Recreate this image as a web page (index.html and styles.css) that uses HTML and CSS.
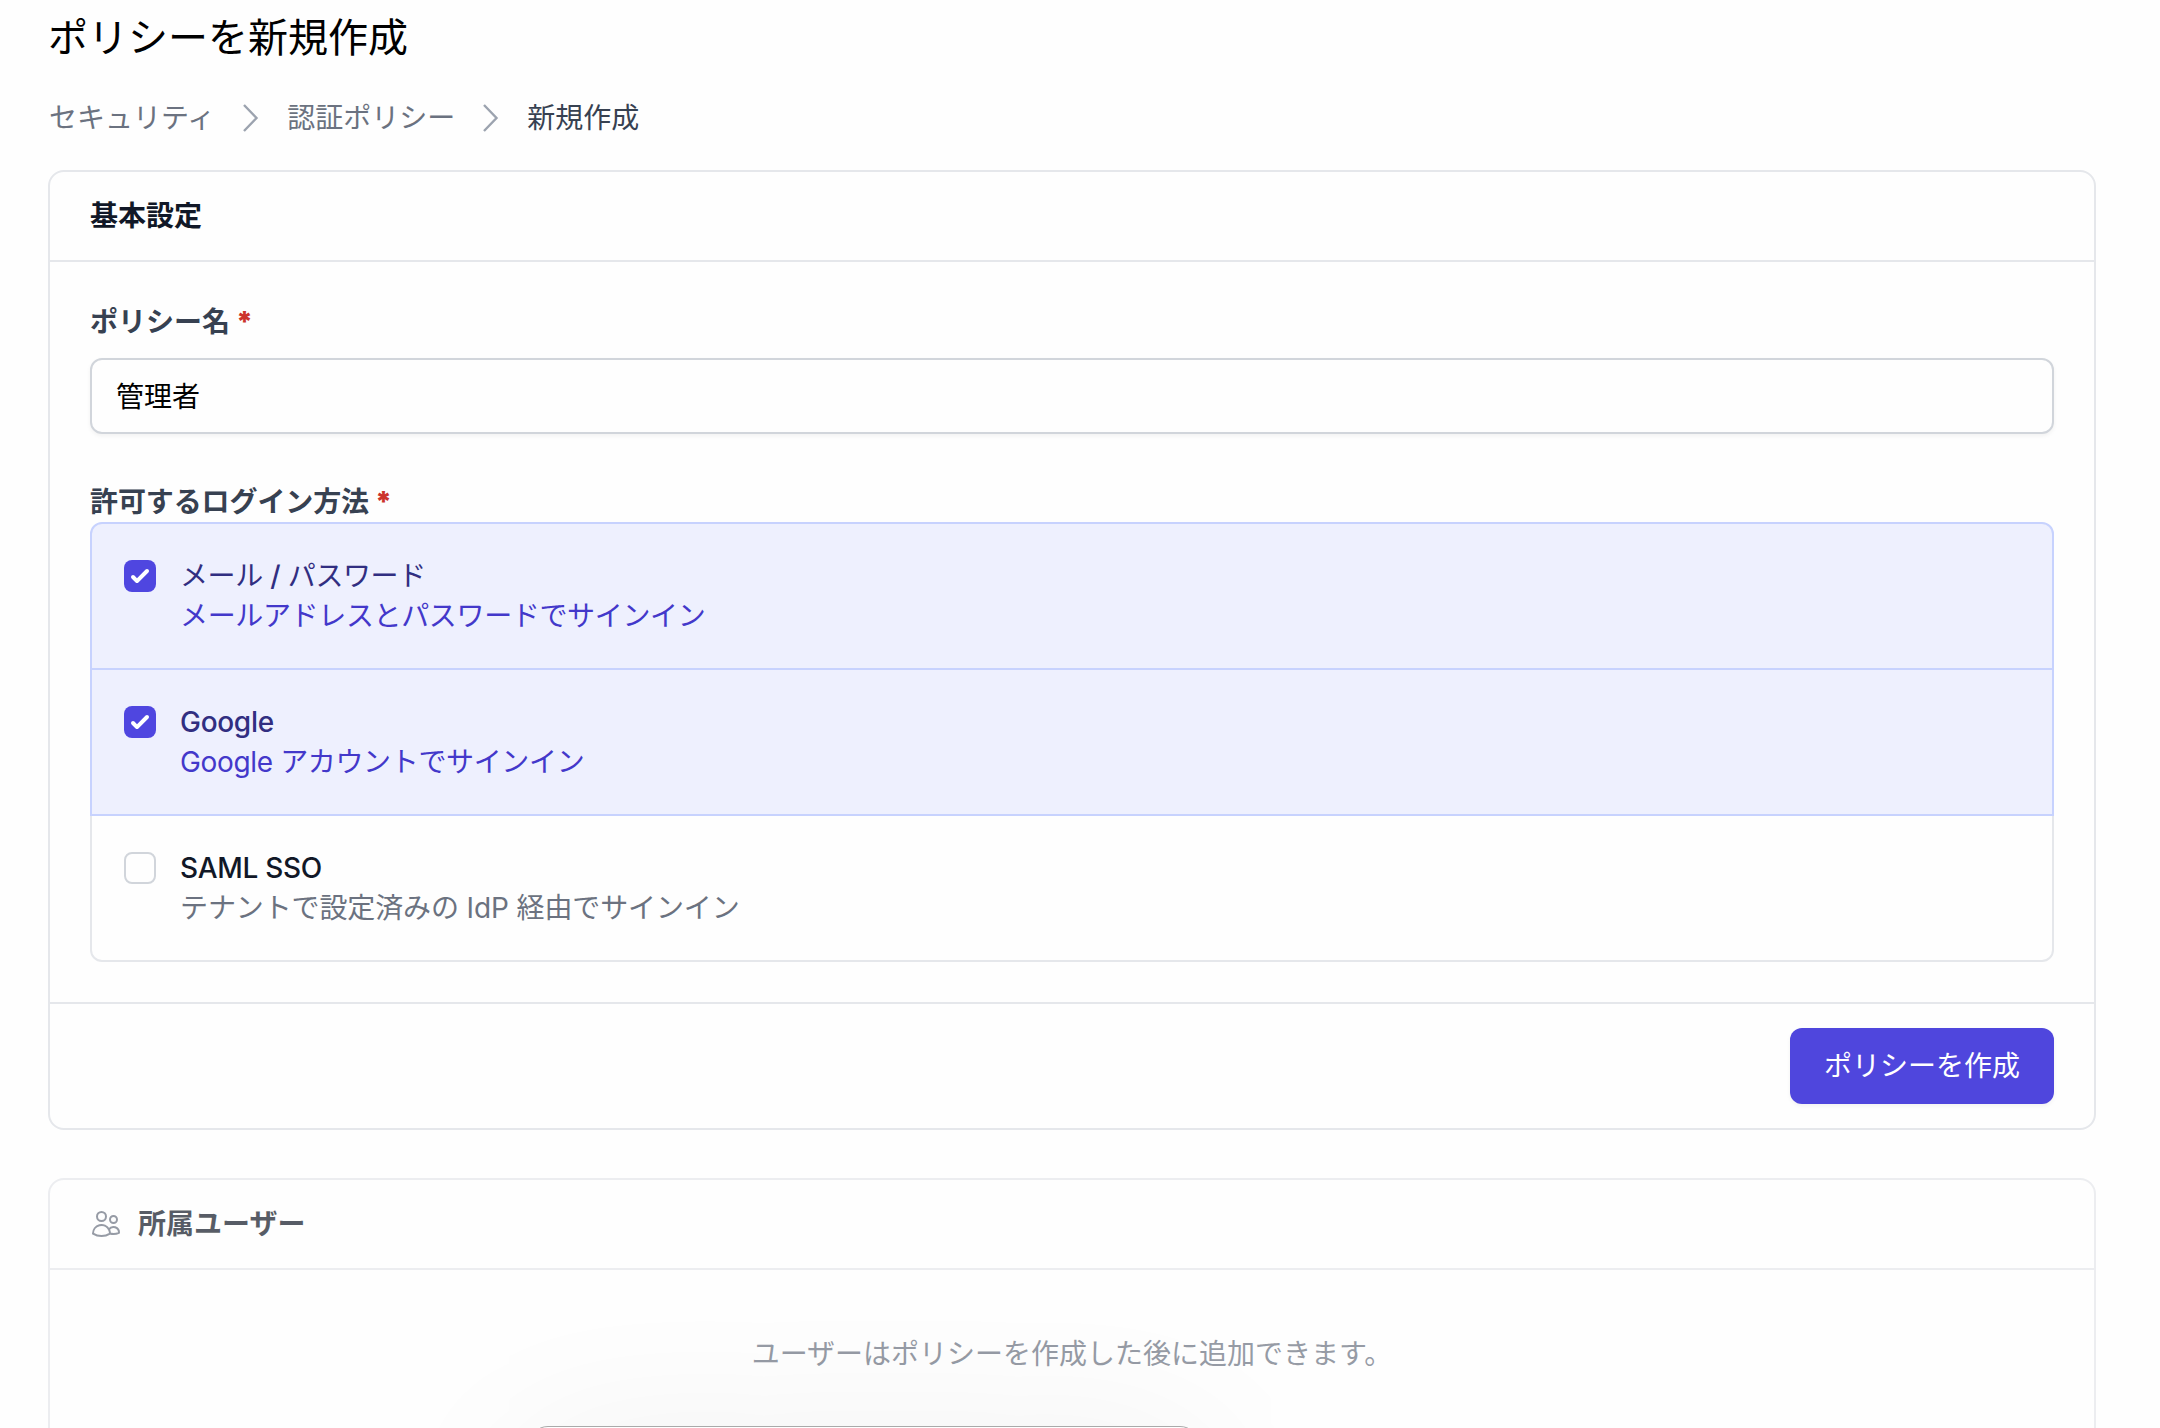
FILE: index.html
```html
<!DOCTYPE html>
<html lang="ja">

<head>
  <meta charset="UTF-8">
  <meta name="viewport" content="width=device-width, initial-scale=1.0">
  <title>ポリシーを新規作成</title>
  <link rel="stylesheet" href="styles.css">
</head>

<body>
  <main class="page">
    <h1 class="title">ポリシーを新規作成</h1>

    <nav class="breadcrumb">
      <a>セキュリティ</a>
      <svg class="chevron" viewBox="0 0 40 40"><path d="M13 7l12.5 13L13 33" /></svg>
      <a>認証ポリシー</a>
      <svg class="chevron" viewBox="0 0 40 40"><path d="M13 7l12.5 13L13 33" /></svg>
      <span class="current">新規作成</span>
    </nav>

    <form class="card">
      <div class="card-header">基本設定</div>
      <div class="card-body">
        <label class="label" for="name">ポリシー名<span class="required">*</span></label>
        <input class="input" type="text" id="name" value="管理者">

        <div class="label label-methods">許可するログイン方法<span class="required">*</span></div>
        <div class="options">
          <label class="option checked">
            <span class="checkbox">
              <svg viewBox="0 0 16 16"><path d="M12.207 4.793a1 1 0 010 1.414l-5 5a1 1 0 01-1.414 0l-2-2a1 1 0 011.414-1.414L6.5 9.086l4.293-4.293a1 1 0 011.414 0z" /></svg>
            </span>
            <span class="option-text">
              <span class="option-name">メール <span class="latin">/</span> パスワード</span>
              <span class="option-desc">メールアドレスとパスワードでサインイン</span>
            </span>
          </label>
          <label class="option checked">
            <span class="checkbox">
              <svg viewBox="0 0 16 16"><path d="M12.207 4.793a1 1 0 010 1.414l-5 5a1 1 0 01-1.414 0l-2-2a1 1 0 011.414-1.414L6.5 9.086l4.293-4.293a1 1 0 011.414 0z" /></svg>
            </span>
            <span class="option-text">
              <span class="option-name latin">Google</span>
              <span class="option-desc">Google アカウントでサインイン</span>
            </span>
          </label>
          <label class="option">
            <span class="checkbox"></span>
            <span class="option-text">
              <span class="option-name latin">SAML SSO</span>
              <span class="option-desc mixed">テナントで設定済みの IdP 経由でサインイン</span>
            </span>
          </label>
        </div>
      </div>
      <div class="card-footer">
        <button class="btn" type="button">ポリシーを作成</button>
      </div>
    </form>

    <section class="card card-muted">
      <div class="card-header">
        <svg class="users" viewBox="0 0 24 24"><path d="M15 19.128a9.38 9.38 0 0 0 2.625.372 9.337 9.337 0 0 0 4.121-.952 4.125 4.125 0 0 0-7.533-2.493M15 19.128v-.003c0-1.113-.285-2.16-.786-3.07M15 19.128v.106A12.318 12.318 0 0 1 8.624 21c-2.331 0-4.512-.645-6.374-1.766l-.001-.109a6.375 6.375 0 0 1 11.964-3.07M12 6.375a3.375 3.375 0 1 1-6.75 0 3.375 3.375 0 0 1 6.75 0Zm8.25 2.25a2.625 2.625 0 1 1-5.25 0 2.625 2.625 0 0 1 5.25 0Z" /></svg>
        所属ユーザー
      </div>
      <p class="empty">ユーザーはポリシーを作成した後に追加できます。</p>
    </section>
  </main>

  <div class="popup"></div>
</body>

</html>
```

FILE: styles.css
```css
* {
  box-sizing: border-box;
}

html,
body {
  height: 100%;
  margin: 0;
  overflow: hidden;
}

body {
  position: relative;
  background: #fefefe;
  color: #000;
  font-family: Inter, "Noto Sans CJK JP", sans-serif;
  font-size: 28px;
  line-height: 40px;
}

.page {
  height: 100%;
  padding: 10px 64px 0 48px;
  overflow: hidden;
}

.title {
  margin: 0 0 32px;
  font-size: 40px;
  font-weight: 400;
  line-height: 56px;
}

.breadcrumb {
  display: flex;
  align-items: center;
  gap: 16px;
  height: 40px;
  margin-bottom: 32px;
  padding-left: 1px;
  color: #6b7280;
}

.breadcrumb .current {
  color: #374151;
}

.chevron {
  width: 40px;
  height: 40px;
  fill: none;
  stroke: #9ca3af;
  stroke-width: 2.4;
}

.card {
  border: 2px solid #e5e7eb;
  border-radius: 16px;
}

.card-header {
  display: flex;
  align-items: center;
  gap: 16px;
  padding: 24px 40px;
  border-bottom: 2px solid #e5e7eb;
  color: #111827;
  font-weight: 600;
}

.card-body {
  padding: 40px;
}

.label {
  display: block;
  color: #374151;
  font-weight: 600;
}

.label-methods {
  margin-top: 48px;
  letter-spacing: -.1px;
}

.required {
  margin-left: 6px;
  color: #cc342d;
  font-weight: 900;
}

.input {
  display: block;
  width: 100%;
  height: 76px;
  margin-top: 16px;
  padding: 0 24px 2px;
  border: 2px solid #d1d5db;
  border-radius: 12px;
  background: #fefefe;
  box-shadow: 0 2px 4px rgba(0, 0, 0, .05);
  color: #000;
  font: inherit;
}

.option {
  display: flex;
  gap: 24px;
  padding: 32px;
  border: 2px solid #e5e7eb;
}

.option + .option {
  margin-top: -2px;
}

.option:first-child {
  border-radius: 12px 12px 0 0;
}

.option:last-child {
  border-radius: 0 0 12px 12px;
}

.option.checked {
  position: relative;
  border-color: #c7d2fe;
  background: #eef0fe;
}

.checkbox {
  flex: none;
  width: 32px;
  height: 32px;
  margin-top: 4px;
  border: 2px solid #d1d5db;
  border-radius: 8px;
}

.checked .checkbox {
  border: 0;
  background: #4f46e0;
}

.checkbox svg {
  display: block;
  fill: #fff;
}

.option-text {
  display: flex;
  flex-direction: column;
}

.option-name {
  color: #111827;
  letter-spacing: -.4px;
}

.option-desc {
  color: #6b7280;
  letter-spacing: -.35px;
}

.option-desc.mixed {
  letter-spacing: -.12px;
}

.latin {
  font-weight: 500;
  letter-spacing: -.3px;
}

.checked .option-name {
  color: #312e81;
}

.checked .option-desc {
  color: #4338ca;
}

.card-footer {
  display: flex;
  justify-content: flex-end;
  padding: 24px 40px;
  border-top: 2px solid #e5e7eb;
}

.btn {
  width: 264px;
  height: 76px;
  padding: 0;
  border: 0;
  border-radius: 12px;
  background: #4f46dd;
  box-shadow: 0 2px 4px rgba(0, 0, 0, .05);
  color: #fff;
  font: inherit;
}

.card-muted {
  height: 400px;
  margin-top: 48px;
  opacity: .7;
}

.users {
  width: 32px;
  height: 32px;
  fill: none;
  stroke: #6b7280;
  stroke-width: 1.5;
  stroke-linecap: round;
  stroke-linejoin: round;
}

.empty {
  margin: 64px 0;
  color: #6b7280;
  text-align: center;
}

/* window peeking in from the bottom edge */
.popup {
  position: absolute;
  top: 1426px;
  left: 528px;
  width: 672px;
  height: 300px;
  border: 1px solid #aaa;
  border-radius: 20px;
  background: #fff;
  box-shadow: 0 36px 170px 10px rgba(0, 0, 0, .07);
}
```
